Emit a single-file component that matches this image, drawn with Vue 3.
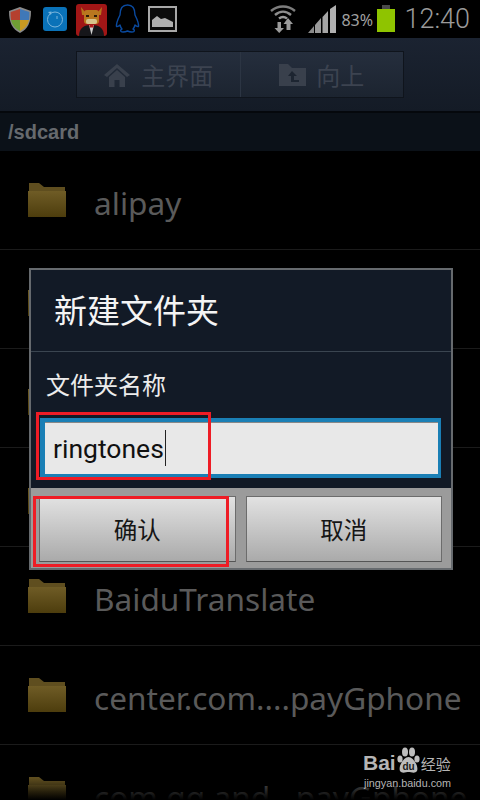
<script setup>
// rows 2-4 sit behind the dialog, only their folder icons peek out
const folders = [
  'alipay',
  '',
  '',
  '',
  'BaiduTranslate',
  'center.com....payGphone',
  'com.qq.and...payGphone'
]
</script>

<template>
  <div class="screen">
    <div class="status">
      <div class="status-left">
        <svg class="ic-shield" width="24" height="28" viewBox="0 0 24 28">
          <path d="M12 1 L23 5 C23 16 20 23 12 27 C4 23 1 16 1 5 Z" fill="#8a8a8a" />
          <path d="M12 3 L12 14 L3 14 C2.6 11 2.6 8 2.6 6 Z" fill="#b5402e" />
          <path d="M12 3 L21.4 6 C21.4 8 21.4 11 21 14 L12 14 Z" fill="#3f78b8" />
          <path d="M3 14 L12 14 L12 25 C7 22.5 4 19 3 14 Z" fill="#6f9d34" />
          <path d="M12 14 L21 14 C20 19 17 22.5 12 25 Z" fill="#c99a22" />
        </svg>
        <svg class="ic-clock" width="24" height="24" viewBox="0 0 24 24">
          <rect width="24" height="24" rx="3" fill="#0a72b8" />
          <circle cx="12" cy="12.5" r="7.5" fill="none" stroke="#7cb6dc" stroke-width="1" />
          <path d="M5 5 L8.5 4.5 L8 8 Z" fill="#7cb6dc" />
          <path d="M14 9 V12" stroke="#7cb6dc" stroke-width="1" />
        </svg>
        <svg class="ic-bull" width="31" height="32" viewBox="0 0 31 32">
          <rect width="31" height="32" rx="3" fill="#a11616" />
          <path d="M5 3 L9 8 L22 8 L26 3 L25 11 L6 11 Z" fill="#b8761c" />
          <rect x="8" y="6" width="15" height="14" rx="3" fill="#b9771f" />
          <rect x="10" y="11" width="3" height="2" fill="#2c1a08" />
          <rect x="18" y="11" width="3" height="2" fill="#2c1a08" />
          <rect x="10" y="15" width="11" height="5" rx="2" fill="#d8c48c" />
          <path d="M3 32 C3 24 8 21 15.5 21 C23 21 28 24 28 32 Z" fill="#16161a" />
          <path d="M13 21 L18 21 L15.5 31 Z" fill="#cfcfcf" />
          <rect x="13.5" y="21" width="4" height="2.5" fill="#b01a1a" />
        </svg>
        <svg class="ic-qq" width="25" height="29" viewBox="0 0 25 29">
          <path d="M12.5 1 C6.5 1 5 6 5 11 C3 15 1 19 1.5 22.5 C3 23 4 22 5 21 C5.5 23 6.5 24.5 7 25 C5 26 5 28 8 28 C10 28 11.5 27.5 12.5 27 C13.5 27.5 15 28 17 28 C20 28 20 26 18 25 C18.5 24.5 19.5 23 20 21 C21 22 22 23 23.5 22.5 C24 19 22 15 20 11 C20 6 18.5 1 12.5 1 Z" fill="#000" stroke="#0a4aa0" stroke-width="1.4" stroke-linejoin="round" />
        </svg>
        <svg class="ic-pic" width="29" height="26" viewBox="0 0 29 26">
          <rect x="1" y="1" width="27" height="24" fill="#0c0c0c" stroke="#a8a8a8" stroke-width="2" />
          <path d="M4 21 V14 L9 10 L13 13 L17 12 L21 14 L25 16 V21 Z" fill="#b0b0b0" />
        </svg>
      </div>
      <div class="status-right">
        <svg class="ic-wifi" width="26" height="29" viewBox="0 0 26 29">
          <path d="M1 7 C8 1 18 1 25 7" fill="none" stroke="#7d7d7d" stroke-width="2.4" />
          <path d="M5 11 C10 6.5 16 6.5 21 11" fill="none" stroke="#8d8d8d" stroke-width="2.4" />
          <path d="M9 14.5 C11.5 12.5 14.5 12.5 17 14.5" fill="none" stroke="#9a9a9a" stroke-width="2.4" />
          <path d="M7.5 19 H11 V25 H14 L9.2 30 L4.5 25 H7.5 Z" fill="#9a9a9a" transform="translate(0 -1)" />
          <path d="M17 13 L22 19 H19.5 V25 H15.5 V19 H12.5 Z" fill="#9a9a9a" transform="translate(1 1)" />
        </svg>
        <svg class="ic-signal" width="29" height="28" viewBox="0 0 29 28">
          <path d="M0 28 L6 21 V28 Z" fill="#8a8a8a" />
          <path d="M7 28 V20 L13 13 V28 Z" fill="#9a9a9a" />
          <path d="M14.5 28 V12 L20 6 V28 Z" fill="#a5a5a5" />
          <path d="M22 28 V4 L28 0 V28 Z" fill="#b0b0b0" />
        </svg>
        <span class="pct">83%</span>
        <div class="battery"><i class="cap"></i><i class="cell"></i></div>
        <span class="clock">12:40</span>
      </div>
    </div>

    <div class="toolbar">
      <div class="segmented">
        <div class="seg">
          <svg width="28" height="24" viewBox="0 0 28 24">
            <path d="M14 1 L27 12 L24 14 L14 5 L4 14 L1 12 Z M6 14 L14 7 L22 14 V24 H16.5 V17 H11.5 V24 H6 Z" fill="#39404c" />
          </svg>
          <span>主界面</span>
        </div>
        <div class="seg">
          <svg width="27" height="22" viewBox="0 0 27 22">
            <path d="M0 0 H9 L13 4 H27 V22 H0 Z" fill="#39404c" />
            <path d="M13 7 L18 12 H15 V16 H20 V18 H12 V12 H9 Z" fill="#1d2531" />
          </svg>
          <span>向上</span>
        </div>
      </div>
    </div>

    <div class="path">/sdcard</div>

    <ul class="list">
      <li v-for="(name, i) in folders" :key="i" class="row">
        <svg width="38" height="34" viewBox="0 0 38 34">
          <defs>
            <linearGradient id="fold" x1="0" y1="0" x2="0" y2="1">
              <stop offset="0" stop-color="#6f5c26" />
              <stop offset="1" stop-color="#4d3d0d" />
            </linearGradient>
          </defs>
          <path d="M1 0 H11 L16 4 H37 V9 H1 Z" fill="#5f4e1f" />
          <rect y="8" width="38" height="26" fill="url(#fold)" />
        </svg>
        <span v-if="name" class="name">{{ name }}</span>
      </li>
    </ul>
    <div class="fade"></div>

    <div class="dialog">
      <div class="title">新建文件夹</div>
      <div class="body">
        <div class="label">文件夹名称</div>
        <div class="input"><span class="typed">ringtones</span><i class="caret"></i></div>
      </div>
      <div class="actions">
        <div class="btn">确认</div>
        <div class="btn">取消</div>
      </div>
    </div>

    <div class="mark mark-input"></div>
    <div class="mark mark-btn"></div>

    <div class="watermark">
      <div class="wm-top">
        <span class="wm-bai">Bai</span>
        <svg width="25" height="28" viewBox="0 0 25 28">
          <ellipse cx="4" cy="12" rx="2.6" ry="3.5" fill="#bdbdbd" />
          <ellipse cx="9" cy="5" rx="3" ry="4.5" fill="#bdbdbd" />
          <ellipse cx="16" cy="5" rx="3" ry="4.5" fill="#bdbdbd" />
          <ellipse cx="21" cy="12" rx="2.6" ry="3.5" fill="#bdbdbd" />
          <path d="M12.5 10 C17 10 23 19 21 24 C19 27 15 25 12.5 25 C10 25 6 27 4 24 C2 19 8 10 12.5 10 Z" fill="#bdbdbd" />
          <text x="12.5" y="23" text-anchor="middle" font-size="10" font-weight="700" font-family="Liberation Sans, sans-serif" fill="#1a1a1a">du</text>
        </svg>
        <span class="wm-jy">经验</span>
      </div>
      <div class="wm-url">jingyan.baidu.com</div>
    </div>
  </div>
</template>

<style scoped>
.screen {
  position: relative;
  width: 480px;
  height: 800px;
  overflow: hidden;
  background: #000;
  font-family: "Noto Sans", "Noto Sans CJK SC", sans-serif;
}

.status {
  height: 38px;
  background: #000;
  display: flex;
  justify-content: space-between;
  align-items: flex-start;
}

.status-left {
  display: flex;
  align-items: flex-start;
  padding-left: 8px;
}

.ic-shield { margin-top: 6px; }
.ic-clock { margin: 7px 0 0 11px; }
.ic-bull { margin: 4px 0 0 9px; }
.ic-qq { margin: 4px 0 0 8px; }
.ic-pic { margin: 6px 0 0 8px; }

.status-right {
  display: flex;
  align-items: flex-start;
  padding-right: 10px;
}

.ic-wifi { margin: 4px 0 0 0; }
.ic-signal { margin: 5px 0 0 12px; }

.pct {
  margin: 8px 0 0 4px;
  color: #a0a0a0;
  font-size: 16px;
  line-height: 24px;
  width: 33px;
}

.battery {
  margin: 5px 0 0 3px;
  width: 18px;
  display: flex;
  flex-direction: column;
  align-items: center;
}

.cap {
  width: 8px;
  height: 4px;
  background: #4a4a4a;
}

.cell {
  width: 18px;
  height: 23px;
  background: #8fc400;
}

.clock {
  margin: 2px 0 0 9px;
  color: #9a9a9a;
  font-family: Roboto, sans-serif;
  font-weight: 300;
  font-size: 27px;
  line-height: 34px;
}

.toolbar {
  height: 75px;
  box-sizing: border-box;
  padding: 13px 76px 0;
  background: linear-gradient(#1b2331, #141b26);
  border-bottom: 2px solid #05080c;
}

.segmented {
  display: flex;
  height: 47px;
  box-sizing: border-box;
  border: 1px solid #0f141c;
}

.seg {
  flex: 1;
  display: flex;
  align-items: center;
  justify-content: center;
  gap: 10px;
  background: linear-gradient(#252e3d, #1c2430);
  border-left: 1px solid #2c3543;
  color: #3c4350;
  font-size: 24px;
}

.seg:first-child { border-left: 0; }

.path {
  height: 38px;
  box-sizing: border-box;
  padding-left: 8px;
  background: #0b1118;
  color: #666a6e;
  font-family: "Liberation Sans", sans-serif;
  font-weight: 700;
  font-size: 20px;
  line-height: 38px;
}

.list {
  list-style: none;
  margin: 0;
  padding: 0;
}

.row {
  height: 99px;
  box-sizing: border-box;
  display: flex;
  align-items: center;
  gap: 28px;
  padding-left: 28px;
  border-bottom: 1px solid #1b1b1b;
}

.name {
  padding-top: 4px;
  color: #5a5a5a;
  font-size: 31.6px;
  white-space: nowrap;
}

.fade {
  position: absolute;
  left: 0;
  right: 0;
  bottom: 0;
  height: 22px;
  background: linear-gradient(rgba(0, 0, 0, 0), #000);
}

.dialog {
  position: absolute;
  left: 29px;
  top: 268px;
  width: 424px;
  height: 302px;
  box-sizing: border-box;
  border: 2px solid #666a6e;
  background: #121a26;
  display: flex;
  flex-direction: column;
}

.title {
  height: 82px;
  box-sizing: border-box;
  padding-left: 23px;
  border-bottom: 1px solid #3a4550;
  color: #f4f4f4;
  font-size: 33px;
  line-height: 81px;
}

.body {
  flex: 1;
  padding: 0 10px 0 9px;
}

.label {
  padding: 18px 0 0 6px;
  height: 48px;
  color: #ececec;
  font-size: 24px;
  line-height: 30px;
}

.input {
  height: 60px;
  box-sizing: border-box;
  border: 4px solid #1a7fb5;
  border-left-width: 5px;
  border-right-width: 3px;
  background: #e8e8e8;
  display: flex;
  align-items: center;
  padding-left: 8px;
  box-shadow: inset 0 1px 0 #888;
}

.typed {
  padding-top: 2px;
  color: #111;
  font-family: Roboto, sans-serif;
  font-size: 26.5px;
  line-height: 34px;
}

.caret {
  width: 1px;
  height: 36px;
  background: #222;
  margin-left: 1px;
}

.actions {
  height: 80px;
  box-sizing: border-box;
  background: #9b9b9b;
  padding: 8px 9px 6px 8px;
  display: flex;
  gap: 10px;
}

.btn {
  flex: 1;
  display: flex;
  align-items: center;
  justify-content: center;
  background: linear-gradient(#e2e2e2, #aaaaaa);
  border: 1px solid #6c6c6c;
  border-bottom-color: #555;
  color: #151515;
  font-size: 23.5px;
}

.mark {
  position: absolute;
  box-sizing: border-box;
  border: 3px solid #ee1c25;
}

.mark-input {
  left: 36px;
  top: 412px;
  width: 175px;
  height: 68px;
}

.mark-btn {
  left: 33px;
  top: 496px;
  width: 196px;
  height: 71px;
}

.watermark {
  position: absolute;
  left: 363px;
  top: 747px;
  width: 100px;
  color: #b5b5b5;
}

.wm-top {
  display: flex;
  align-items: flex-end;
  height: 28px;
  font-family: "Liberation Sans", "Noto Sans CJK SC", sans-serif;
}

.wm-bai {
  font-weight: 700;
  font-size: 21px;
  line-height: 24px;
}

.wm-jy {
  font-size: 15px;
  line-height: 20px;
}

.wm-url {
  margin-top: 2px;
  margin-left: 1px;
  font-family: "Liberation Sans", sans-serif;
  font-size: 10.8px;
  line-height: 13px;
  white-space: nowrap;
}
</style>

<style>
html, body {
  background: #000;
}
</style>
